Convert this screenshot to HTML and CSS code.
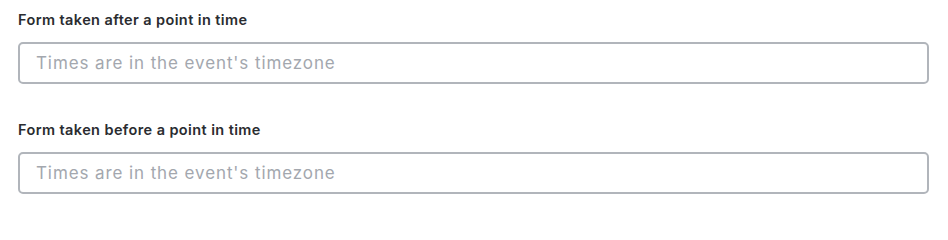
FILE: index.html
```html
<!DOCTYPE html>
<html>
<head>
<meta charset="utf-8">
<link rel="stylesheet" href="styles.css">
</head>
<body>
<div class="form">
  <div class="field">
    <label class="label" for="after">Form taken after a point in time</label>
    <input class="input" id="after" type="text" placeholder="Times are in the event's timezone">
  </div>
  <div class="field">
    <label class="label" for="before">Form taken before a point in time</label>
    <input class="input" id="before" type="text" placeholder="Times are in the event's timezone">
  </div>
</div>
</body>
</html>
```
FILE: styles.css
```css
html, body {
  margin: 0;
  padding: 0;
  background: #ffffff;
}
body {
  font-family: Inter, "Noto Sans", "Liberation Sans", sans-serif;
}
.form {
  display: flex;
  flex-direction: column;
  gap: 36px;
  padding: 10px 19px 0 18px;
}
.field {
  display: flex;
  flex-direction: column;
  gap: 12px;
}
.label {
  font-size: 14.5px;
  line-height: 20px;
  font-weight: 600;
  letter-spacing: 0.4px;
  color: #2a2c30;
}
.input {
  box-sizing: border-box;
  height: 42px;
  width: 100%;
  margin: 0;
  border: 2px solid #b1b5bb;
  border-radius: 5px;
  padding: 0 16px;
  font-family: inherit;
  font-size: 17px;
  letter-spacing: 0.9px;
  color: #2a2c30;
  background: #fff;
  outline: none;
}
.input::placeholder {
  color: #a3a7ae;
}
```
